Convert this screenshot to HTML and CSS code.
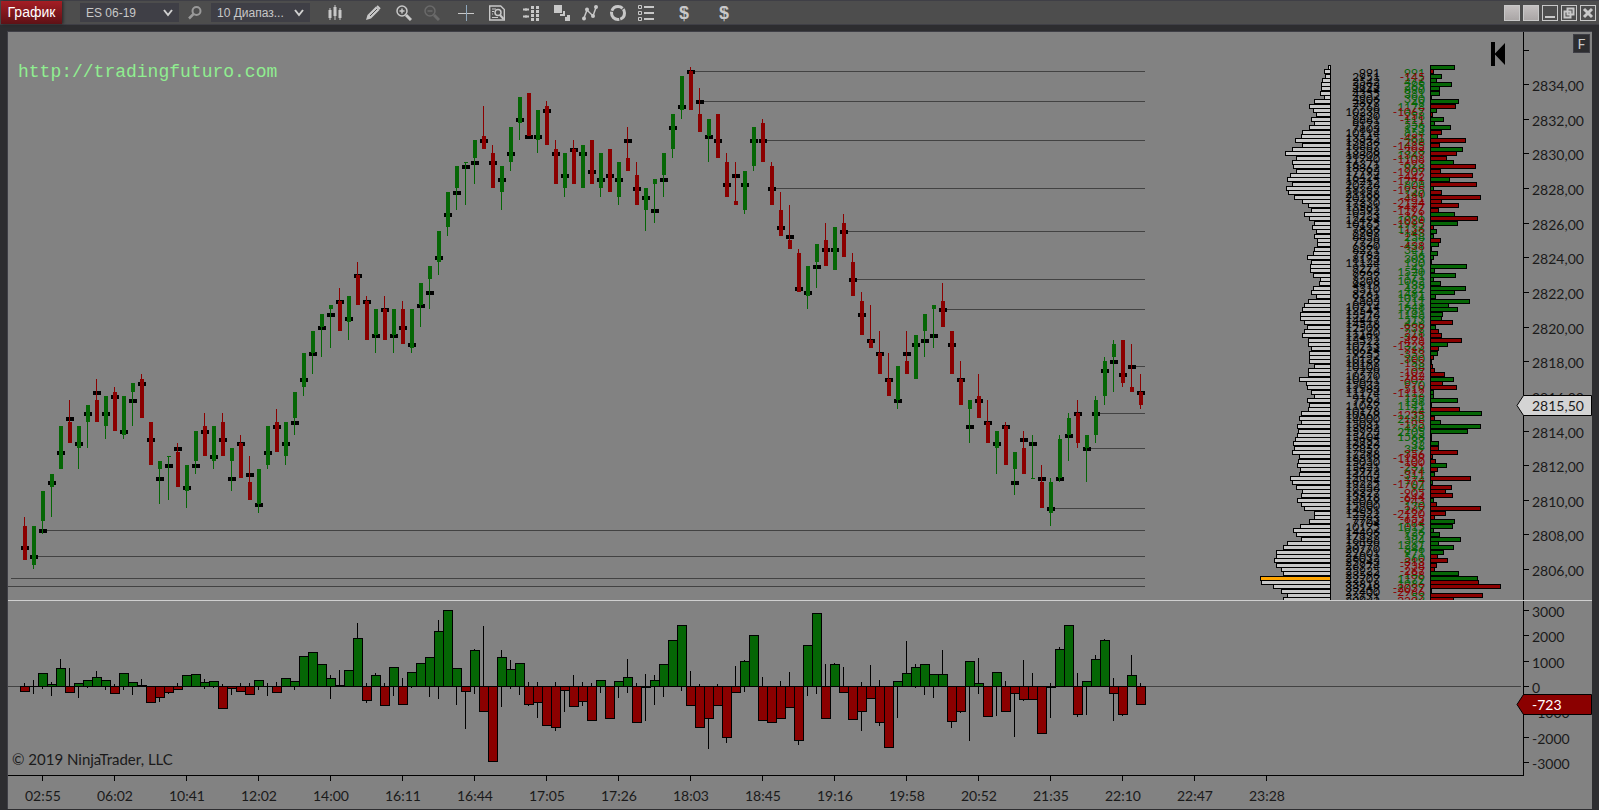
FILE: index.html
```html
<!DOCTYPE html>
<html lang="ru">
<head>
    <meta charset="UTF-8">
    <meta name="viewport" content="width=device-width, initial-scale=1">
    <title>График</title>
    <link rel="stylesheet" href="styles.css">
</head>
<body>

<!-- toolbar -->
<header class="toolbar">
    <h1 class="tab">График</h1>

    <div class="combo">
        <select aria-label="Инструмент">
            <option>ES 06-19</option>
        </select>
        <svg class="chevron" viewBox="0 0 10 8"><path d="M1 1l4 5 4-5"/></svg>
    </div>
    <button class="search" aria-label="Поиск">
        <svg viewBox="0 0 16 16"><circle cx="9.500" cy="6" r="4"/><path d="M6.500 9L2 13.500" stroke-width="2.500"/></svg>
    </button>
    <div class="combo">
        <select aria-label="Интервал">
            <option>10 Диапаз...</option>
        </select>
        <svg class="chevron" viewBox="0 0 10 8"><path d="M1 1l4 5 4-5"/></svg>
    </div>

    <nav class="tools">
        <button aria-label="Стиль графика">
            <svg viewBox="0 0 16 16"><path d="M3 3v12M8 0v15M13 3v12" stroke-width="1"/><path d="M3 5v8M8 2v9M13 5v8" stroke-width="3"/></svg>
        </button>
        <button class="gap-l" aria-label="Рисование">
            <svg viewBox="0 0 16 16"><path d="M1 15l1.500-5L11 1.500 14.500 5 6 13.500z" fill="currentColor" stroke="none"/><path d="M5 11l7-7" stroke="#4d4d4d" stroke-width="1"/><path d="M12 1l3 3" stroke-width="2"/></svg>
        </button>
        <button class="gap-s" aria-label="Увеличить">
            <svg viewBox="0 0 16 16"><circle cx="6" cy="6" r="5" stroke-width="1.500"/><path d="M3.500 6h5M6 3.500v5" stroke-width="1.500"/><path d="M10 10l5 5" stroke-width="3"/></svg>
        </button>
        <button aria-label="Уменьшить" disabled>
            <svg viewBox="0 0 16 16"><circle cx="6" cy="6" r="5" stroke-width="1.500"/><path d="M3.500 6h5" stroke-width="1.500"/><path d="M10 10l5 5" stroke-width="3"/></svg>
        </button>
        <button class="gap-m" aria-label="Перекрестие">
            <svg viewBox="0 0 16 16"><path d="M0 8.500h16" stroke-width="1"/><path d="M8.500 0v16" stroke="#8fa8bd" stroke-width="1"/></svg>
        </button>
        <button class="gap-s" aria-label="Окно данных">
            <svg viewBox="0 0 16 16"><path d="M.7 1h11l3.600 3.500V15H.7z" stroke-width="1.400"/><path d="M3 4h4M3 6.500h2M3 9h1M3 12.500h6" stroke-width="1.200"/><circle cx="9" cy="7.500" r="3" stroke-width="1.500"/><path d="M11 10l3.500 4" stroke-width="2"/></svg>
        </button>
        <button class="gap-m" aria-label="Chart Trader">
            <svg viewBox="0 0 16 16"><path d="M0 4.500h6M0 11.500h6" stroke-width="2"/><path d="M3 3v3M3 10v3" stroke-width="1"/><path d="M9.500 1v15M14.500 1v15" stroke-width="3" stroke-dasharray="3 1"/></svg>
        </button>
        <button class="gap-s" aria-label="Серии данных">
            <svg viewBox="0 0 16 16"><path d="M0 0h8v8H0zM6 9h5v2H6zM9 6h2v5H9zM11 12h5v4h-5zM13 10h3v6h-3z" fill="currentColor" stroke="none"/></svg>
        </button>
        <button aria-label="Индикаторы">
            <svg viewBox="0 0 16 16"><path d="M2 13L5 5l6 6 3-8.500" stroke-width="1.500"/><g fill="currentColor" stroke="none"><circle cx="2" cy="13.500" r="2"/><circle cx="5" cy="4.500" r="2"/><circle cx="11" cy="11" r="2"/><circle cx="14" cy="2" r="2"/></g></svg>
        </button>
        <button aria-label="Стратегии">
            <svg viewBox="0 0 16 16"><circle cx="8" cy="8" r="6.500" stroke-width="3" stroke-dasharray="12.600 1" stroke-dashoffset="5"/></svg>
        </button>
        <button aria-label="Свойства">
            <svg viewBox="0 0 16 16"><path d="M.5.5h3v3h-3zM.5 6.500h3v3h-3zM.5 12.500h3v3h-3z" stroke-width="1"/><path d="M6 2h10M6 8h10M6 14h10" stroke-width="2"/></svg>
        </button>
        <button class="dollar gap-l">$</button>
        <button class="dollar gap-xl">$</button>
    </nav>

    <div class="window-buttons">
        <button class="plain" aria-label="Связь инструмента"></button>
        <button class="plain" aria-label="Связь интервала"></button>
        <button aria-label="Свернуть"><svg viewBox="0 0 14 14"><path d="M2 11h10" stroke-width="2"/></svg></button>
        <button aria-label="Развернуть"><svg viewBox="0 0 14 14"><path d="M5.500 2.500h6v6h-6zM2.500 5.500h6v6h-6z"/></svg></button>
        <button aria-label="Закрыть"><svg viewBox="0 0 14 14"><path d="M3 3l8 8M11 3l-8 8" stroke-width="3"/></svg></button>
    </div>
</header>

<!-- chart -->
<main class="chart">
    <section class="panel price-panel">
        <svg class="plot" id="price-plot"></svg>
        <svg class="axis" id="price-axis"></svg>
        <a class="site" href="#">http://tradingfuturo.com</a>
        <button class="to-start" aria-label="К последнему бару">
            <svg viewBox="0 0 14 24"><path d="M0 0h4v11.500L14 1v22L4 12.500V24H0z"/></svg>
        </button>
        <button class="fixed-scale">F</button>
    </section>
    <section class="panel delta-panel">
        <svg class="plot" id="delta-plot"></svg>
        <svg class="axis" id="delta-axis"></svg>
        <p class="copyright">© 2019 NinjaTrader, LLC</p>
    </section>
    <svg class="time-axis" id="time-axis"></svg>
</main>

<script src="chart.js"></script>
</body>
</html>
```

FILE: styles.css
```css
* {
    box-sizing: border-box;
}

body {
    margin: 0;
    height: 100vh;
    display: flex;
    flex-direction: column;
    overflow: hidden;
    background: #2d2d30;
    font-family: "Liberation Sans", Arial, sans-serif;
    font-size: 12px;
}

button {
    padding: 0;
    border: none;
    background: none;
    color: #c8c8c8;
    font-family: inherit;
}

/* toolbar */
.toolbar {
    flex: none;
    display: flex;
    align-items: center;
    height: 25px;
    padding: 0 3px 0 1px;
    border-top: 1px solid #3f3f46;
    border-bottom: 1px solid #3f3f46;
    background: #4d4d4d;
}

.toolbar svg {
    display: block;
    fill: none;
    stroke: currentColor;
    stroke-width: 2;
}

.tab {
    align-self: stretch;
    width: 61px;
    margin: 0 18px 0 0;
    background: linear-gradient(#a51d24, #5e1216);
    box-shadow: 1px 0 3px #222;
    color: #fff;
    font-size: 14px;
    font-weight: normal;
    line-height: 23px;
    text-align: center;
}

.combo {
    position: relative;
    width: 99px;
    height: 19px;
}

.combo select {
    width: 100%;
    height: 100%;
    padding: 0 6px;
    border: none;
    appearance: none;
    background: #3f3f46;
    color: #c8c8c8;
    font-family: inherit;
    font-size: 12px;
}

.chevron {
    position: absolute;
    top: 6px;
    right: 6px;
    width: 10px;
    height: 8px;
    color: #d0d0d0;
    pointer-events: none;
}

.search {
    width: 32px;
    color: #999;
}

.search svg {
    width: 16px;
    height: 16px;
    margin: 0 auto;
}

.tools {
    flex: 1;
    display: flex;
    align-items: center;
    padding-left: 11px;
}

.tools button {
    width: 28px;
    height: 20px;
}

.tools button:disabled {
    color: #6a6a6a;
}

.tools svg {
    width: 16px;
    height: 16px;
    margin: 0 auto;
}

.tools .gap-s { margin-left: 3px; }
.tools .gap-m { margin-left: 6px; }
.tools .gap-l { margin-left: 10px; }
.tools .gap-xl { margin-left: 12px; }

.tools .dollar {
    font-size: 18px;
    font-weight: bold;
}

.window-buttons {
    display: flex;
    gap: 3px;
}

.window-buttons button {
    width: 16px;
    height: 16px;
    border: 1px solid #c8c8c8;
}

.window-buttons .plain {
    background: linear-gradient(#c4c0c0, #aaa6a6);
}

/* chart */
.chart {
    flex: 1;
    min-height: 0;
    display: flex;
    flex-direction: column;
    margin: 6px 7px 1px 7px;
    border: solid #3f3f46;
    border-width: 1px 0 0 1px;
    background: #828282;
    font-family: Lato, "Century Gothic", sans-serif;
    font-size: 14px;
}

.panel {
    position: relative;
    display: flex;
    min-height: 0;
}

.price-panel {
    flex: 568;
    border-bottom: 1px solid #d0d0d0;
}

.delta-panel {
    flex: 174;
}

.plot {
    flex: 1;
    min-width: 0;
    height: 100%;
}

.axis {
    flex: none;
    width: 69px;
    height: 100%;
    overflow: visible;
}

.time-axis {
    flex: none;
    display: block;
    width: 100%;
    height: 34px;
}

.axis text,
.time-axis text {
    fill: #1a1a1a;
}

.axis .tag-light { fill: #d4d4d4; stroke: #000; }
.axis .tag-dark { fill: #8b0000; stroke: #000; }
.axis .tag-value { fill: #fff; }

.time-axis text {
    text-anchor: middle;
}

.line { fill: #000; }
.ray { fill: #424242; }
.up { fill: #056605; }
.down { fill: #8b0000; }
.vol { fill: #c8c8c8; }
.vol-max { fill: #ffa500; }

.boxed {
    stroke: #000;
    stroke-width: 1;
}

.profile-text {
    font-size: 12px;
    text-anchor: end;
}

.site {
    position: absolute;
    top: 28px;
    left: 10px;
    color: #90ee90;
    font-family: "Courier New", "Liberation Mono", monospace;
    font-size: 18px;
    line-height: 24px;
    text-decoration: none;
}

.to-start {
    position: absolute;
    top: 10px;
    right: 87px;
    width: 14px;
    height: 24px;
}

.to-start svg {
    display: block;
    fill: #000;
}

.fixed-scale {
    position: absolute;
    top: 2px;
    right: 2px;
    width: 17px;
    height: 19px;
    border: 1px solid #3f3f46;
    background: #2d2d30;
    font-size: 14px;
}

.copyright {
    position: absolute;
    bottom: 6px;
    left: 4px;
    margin: 0;
    color: #1a1a1a;
    font-size: 15px;
    line-height: 20px;
}
```

FILE: chart.js
```js
// one tick = 0.25 point, prices are counted in ticks above 2800
// open, high, low, close, level with the biggest volume
const candles = [
    [34,36,26,26,29], [25,34,24,34,27], [35,42,32,42,33], [43,46,36,46,44], [47,57,47,57,51],
    [58,63,53,53,59], [52,57,47,57,53], [58,62,52,62,60], [63,68,58,58,65], [57,64,54,64,60],
    [65,66,56,56,64], [55,64,54,64,56], [65,67,57,67,63], [68,69,59,59,67], [58,58,48,48,54],
    [47,49,39,49,45], [50,50,40,50,48], [51,53,43,43,52], [42,48,38,48,43], [49,56,46,56,48],
    [57,60,50,50,56], [49,57,47,57,50], [58,60,50,50,54], [49,52,42,52,45], [53,55,45,45,53],
    [44,50,40,40,46], [39,47,37,47,39], [48,57,47,57,51], [58,61,51,51,57], [50,58,48,58,53],
    [59,65,55,65,58], [66,74,64,74,68], [74,79,69,79,74], [80,83,73,83,80], [84,85,75,85,83],
    [86,89,79,79,86], [81,87,77,87,82], [92,95,85,85,92], [86,87,77,77,86], [78,84,74,84,78],
    [84,87,77,77,84], [78,84,74,84,78],
    [84,86,76,76,80], [75,84,74,84,76], [85,90,80,90,85], [91,94,84,94,88], [95,102,92,102,96],
    [103,111,101,111,106], [112,117,107,117,111], [118,118,108,118,117], [119,123,113,123,118],
    [124,131,121,121,123], [120,122,112,112,118], [111,117,107,117,114], [118,126,116,126,120],
    [127,133,123,133,128], [134,134,124,124,124], [123,130,120,130,124], [131,132,122,122,130],
    [121,123,113,113,120], [112,120,110,120,115], [121,123,113,113,121], [112,122,112,122,120],
    [123,123,113,113,116], [112,120,110,120,114], [121,121,111,111,115], [110,118,108,118,114],
    [119,126,116,116,123], [115,118,108,108,112], [107,112,102,112,110], [113,114,104,114,107],
    [115,120,110,120,114], [121,129,119,129,126], [130,138,128,138,131], [139,140,130,130,139],
    [129,135,125,125,132], [124,128,118,128,124], [129,129,119,119,123], [118,120,110,110,113],
    [109,118,108,108,115], [107,116,106,116,113], [117,126,116,126,123], [127,128,118,118,123],
    [117,118,108,108,112], [107,111,101,101,103], [100,108,98,98,101], [97,98,88,88,89],
    [87,94,84,94,88], [95,99,89,99,94], [100,104,94,94,98], [93,103,93,103,98],
    [104,106,96,96,102], [95,97,87,87,91], [86,88,78,78,83], [77,85,75,75,77], [74,79,69,69,74],
    [68,74,64,64,68], [63,71,61,71,63], [72,79,69,69,74], [68,78,68,78,76], [79,83,73,83,77],
    [84,85,75,85,78], [86,90,80,80,84], [79,79,69,69,76], [68,72,62,62,68], [61,63,53,63,57],
    [64,69,59,59,63], [58,63,53,53,58], [52,56,46,56,53], [57,58,48,48,57], [47,51,41,51,44],
    [52,56,46,46,54], [45,55,45,45,53], [44,48,38,38,45], [37,45,34,44,38], [45,55,44,54,45],
    [55,60,49,59,55], [60,63,52,53,60], [52,55,44,55,52], [55,64,53,63,60], [64,73,62,72,70],
    [73,77,65,76,72], [77,77,66,67,69], [66,76,65,65,71], [65,69,61,62,65]
];

// candles whose level was not touched again
const untouched = [1, 2, 74, 75, 82, 83, 91, 92, 102, 114, 118, 119, 123];

// delta, its high and its low, in lots of 13 contracts
const deltas = [
    [-15,8,0], [0,17,-25], [40,0,-10], [7,11,-31], [55,83,0], [-18,53,0], [10,0,-37], [19,0,-7],
    [28,44,0], [19,0,-12], [-21,5,0], [40,0,-12], [12,0,-28], [3,20,0], [-48,0,-52], [-33,0,-49],
    [-18,0,-25], [-9,8,0], [34,0,-4], [37,0,0], [12,20,-10], [16,0,-7], [-66,5,0], [-6,0,-28],
    [-15,8,0], [-24,8,0], [19,0,-12], [0,8,-31], [-18,11,-22], [25,0,-4], [16,0,-12], [91,0,0],
    [103,0,0], [67,0,0], [25,32,-40], [3,47,0], [49,0,-4], [145,191,0], [-42,8,-52], [34,38,0],
    [-57,8,0], [58,0,-31], [-54,23,-58], [43,0,-7], [70,0,0], [88,0,-34], [166,200,-40], [229,0,0],
    [55,0,-58], [-15,0,-130], [109,113,-25], [-75,182,0], [-228,0,0], [88,110,-64], [52,80,-10],
    [70,0,-28], [-54,11,-61], [-48,11,-97], [-120,0,0], [-126,11,-136], [-12,0,-79], [-60,32,0],
    [-45,11,-61], [-105,8,0], [19,0,-22], [-96,0,0], [16,0,-37], [28,83,-22], [-111,8,0],
    [-3,35,-106], [19,32,-58], [67,0,-34], [139,0,-4], [184,0,-16], [-57,44,0], [-126,5,0],
    [-96,0,-193], [-57,5,0], [-156,0,-172], [-18,59,-22], [76,80,-19], [154,0,0], [-102,26,0],
    [-111,0,0], [-96,14,0], [-63,41,0], [-165,0,-178], [124,0,-31], [220,0,-25], [-96,68,0],
    [67,71,-4], [-18,56,-22], [-99,0,0], [-75,11,-136], [-36,65,0], [-111,17,-121], [-186,0,-190],
    [16,0,-97], [40,137,0], [58,68,-7], [67,0,-28], [37,0,-37], [37,110,0], [-108,0,-127],
    [-75,0,-82], [76,0,-166], [10,86,-25], [-90,0,0], [43,0,-91], [-75,14,0], [-21,0,-154],
    [-39,80,-46], [-39,38,0], [-144,0,0], [-3,8,-97], [112,119,0], [184,0,0], [-84,38,-94],
    [16,0,-88], [82,95,0], [139,143,0], [-21,23,-106], [-84,0,-91], [34,95,-4], [-54,8,0]
];

// volume by price from 2835,00 down, one row for each tick, in lots of 160
const volumes = [
    6,18,15,24,27,27,30,18,48,63,51,42,57,48,63,84,87,105,84,114,135,102,114,111,102,120,129,114,
    132,126,108,84,66,57,78,63,48,54,42,48,39,39,48,51,69,57,60,60,51,30,33,51,57,42,66,78,84,90,
    90,78,69,78,84,66,66,57,63,63,63,48,66,66,93,72,69,57,48,69,63,66,87,93,87,99,96,99,105,111,
    108,114,93,96,99,90,93,120,114,102,84,87,99,87,78,48,48,63,90,111,102,87,129,141,162,162,168,
    162,147,141,211,207,171,147,129,141
];

// delta of the same rows, in lots of 14
const rowDeltas = [
    73,-10,34,19,64,28,28,4,85,-76,19,-7,40,13,61,-34,22,-106,-28,97,-79,-49,70,-136,-31,-127,58,
    -139,10,-34,-151,-34,-85,-25,73,-142,82,-10,19,10,-31,25,4,22,10,3,109,13,76,10,31,106,73,16,
    118,55,82,37,34,-67,16,-25,-34,-94,52,-25,22,-10,3,-7,-13,-43,70,-37,-79,10,10,82,4,-88,154,
    -13,31,151,112,3,3,25,-25,-82,-7,-16,49,-22,13,-121,7,-64,-46,-67,10,-19,-151,-46,-13,73,67,
    10,28,91,25,70,40,-22,-52,-19,-13,85,142,-145,-211,4,-157,-70
];

const times = ['02:55', '06:02', '10:41', '12:02', '14:00', '16:11', '16:44', '17:05', '17:26',
    '18:03', '18:45', '19:16', '19:58', '20:52', '21:35', '22:10', '22:47', '23:28'];

const STEP = 9;       // distance between bars
const FIRST = 17;     // middle of the first bar
const TOP_ROW = 140;

function rect(x, y, w, h, cls) {
    return `<rect x="${x}" y="${y}" width="${w}" height="${h}" class="${cls}"/>`;
}

function text(x, y, value, cls) {
    return `<text x="${x}" y="${y}" class="${cls || ''}">${value}</text>`;
}

function box(x, y, w, h, cls) {
    return rect(x + 0.5, y + 0.5, w, h, cls + ' boxed');
}

function tag(y, cls) {
    return `<path class="${cls}" d="M-6 ${y + 0.5}L.5 ${y - 9.5}H68.500V${y + 10.5}H.5Z"/>`;
}

function drawPrice() {
    const svg = document.getElementById('price-plot');
    const W = svg.clientWidth;
    const H = svg.clientHeight;
    const y = t => Math.round((148.05 - t) * H / 131.2);
    const end = FIRST + (candles.length - 1) * STEP + 4;
    let out = rect(3, y(22), end - 3, 1, 'ray') + rect(0, y(20), end, 1, 'ray');

    untouched.forEach(i => {
        const x = FIRST + i * STEP;
        out += rect(x, y(candles[i][4]), end - x, 1, 'ray');
    });

    candles.forEach(([open, high, low, close, level], i) => {
        const x = FIRST + i * STEP;
        const cls = close >= open ? 'up' : 'down';
        const top = y(Math.max(open, close));
        const bottom = y(Math.min(open, close));
        out += rect(x - 4, y(level) - 1, 8, 4, 'line');
        out += rect(x - 1, y(high), 1, y(low) - y(high), cls);
        out += rect(x - 2, top, 4, Math.max(bottom - top, 1), cls);
    });

    // profiles stay at the right side of the plot
    const volX = W - 193;
    const deltaX = W - 93;
    const max = Math.max(...volumes);
    volumes.forEach((v, i) => {
        const t = TOP_ROW - i;
        const w = Math.round(v / 3);
        out += box(volX - w, y(t) - 2, w, 4, v === max ? 'vol-max' : 'vol');
        const d = rowDeltas[i];
        out += box(deltaX, y(t) - 2, Math.round(Math.abs(d) / 3), 4, d > 0 ? 'up' : 'down');
    });
    volumes.forEach((v, i) => {
        const base = y(TOP_ROW - i) + 10;
        const d = rowDeltas[i];
        const volume = i ? v * 160 + (i * 71) % 160 : 991;
        const delta = i ? d * 14 - (i * 5) % 14 : 991;
        out += text(W - 143, base, volume, 'profile-text');
        out += text(W - 98, base, delta, 'profile-text ' + (d > 0 ? 'up' : 'down'));
    });
    out += rect(volX, y(TOP_ROW) - 2, 1, H, 'line') + rect(deltaX, y(TOP_ROW) - 2, 1, H, 'line');
    svg.innerHTML = out;

    let axis = rect(0, 0, 1, H, 'line');
    for (let p = 2836; p >= 2806; p -= 2) {
        const py = y((p - 2800) * 4);
        axis += rect(0, py, 6, 1, 'line');
        if (p < 2836) axis += text(9, py + 7, p + ',00');
    }
    const last = y(62);
    axis += tag(last, 'tag-light') + text(9, last + 6, '2815,50');
    document.getElementById('price-axis').innerHTML = axis;
}

function drawDelta() {
    const svg = document.getElementById('delta-plot');
    const W = svg.clientWidth;
    const H = svg.clientHeight;
    const y = v => Math.round(H * (0.488 - v * 0.0001456));
    const zero = y(0);
    let out = rect(0, zero, W - 2, 1, 'ray');

    deltas.forEach(([value, high, low], i) => {
        const x = FIRST + i * STEP;
        const top = Math.min(y(value * 13), zero);
        const bottom = Math.max(y(value * 13), zero);
        out += rect(x - 1, y(high * 13), 1, y(low * 13) - y(high * 13), 'line');
        out += value ? box(x - 5, top, 9, bottom - top, value > 0 ? 'up' : 'down')
                     : rect(x - 5, zero, 9, 1, 'line');
    });
    svg.innerHTML = out;

    let axis = rect(0, 0, 1, H, 'line');
    for (let v = 3000; v >= -3000; v -= 1000) {
        axis += rect(0, y(v), 6, 1, 'line') + text(9, y(v) + 7, v);
    }
    const last = y(-723);
    axis += tag(last, 'tag-dark') + text(9, last + 6, '-723', 'tag-value');
    document.getElementById('delta-axis').innerHTML = axis;
}

function drawTime() {
    const svg = document.getElementById('time-axis');
    let out = rect(0, 0, svg.clientWidth - 68, 1, 'line');
    times.forEach((time, i) => {
        const x = FIRST + (2 + i * 8) * STEP;
        out += rect(x - 1, 0, 1, 6, 'line') + text(x, 26, time);
    });
    svg.innerHTML = out;
}

function draw() {
    drawPrice();
    drawDelta();
    drawTime();
}

window.addEventListener('resize', draw);
draw();
```
